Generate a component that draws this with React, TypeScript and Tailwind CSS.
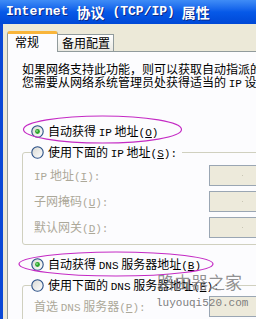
import React from "react";

const L = ({ children }: { children: React.ReactNode }) => (
  <span className="font-['Liberation_Mono',monospace] text-[11px]">{children}</span>
);

const Radio = ({ checked }: { checked?: boolean }) => (
  <svg width="13" height="13" viewBox="0 0 13 13" className="shrink-0">
    <defs>
      <linearGradient id="rfill" x1="0" y1="0" x2="1" y2="1">
        <stop offset="0" stopColor="#D8D8D2" />
        <stop offset="1" stopColor="#FFFFFF" />
      </linearGradient>
    </defs>
    <circle cx="6.5" cy="6.5" r="5.7" fill="url(#rfill)" stroke="#2A4F86" strokeWidth="1.1" />
    {checked && <circle cx="6.5" cy="6.5" r="2.4" fill="#2BA42B" />}
    {checked && <circle cx="6" cy="6" r="0.9" fill="#8EE08E" />}
  </svg>
);

const RadioRow = ({ checked, children }: { checked?: boolean; children: React.ReactNode }) => (
  <div className="flex items-center h-[21px] gap-[4px] whitespace-nowrap">
    <Radio checked={checked} />
    <span>{children}</span>
  </div>
);

const Field = ({ label, dot }: { label: React.ReactNode; dot?: boolean }) => (
  <div className="flex items-center h-[21px]">
    <span className="w-[175px] shrink-0 text-[#ACA899] whitespace-nowrap">{label}</span>
    <div className="w-[80px] h-[21px] shrink-0 border border-[#9AA6B3] bg-[#EDEADB] relative">
      {dot && <span className="absolute left-[32px] top-[9px] w-[1px] h-[1px] bg-[#C9C6B4]" />}
    </div>
  </div>
);

export default function App() {
  return (
    <div className="w-[256px] h-[319px] overflow-hidden relative bg-[#ECE9D8] font-['Noto_Sans_CJK_SC',sans-serif] text-[12px] text-black flex flex-col">
      {/* title bar */}
      <div className="h-[24px] shrink-0 bg-gradient-to-b from-[#3F8CF6] via-[#0659E8] to-[#0048D6] flex items-center pl-[6px] text-white font-bold whitespace-nowrap [text-shadow:1px_1px_#0A2A8A]">
        <span className="font-['Liberation_Mono',monospace] text-[13px]">Internet</span>
        <span className="text-[14px] ml-[8px]">协议</span>
        <span className="font-['Liberation_Mono',monospace] text-[13px] ml-[8px]">(TCP/IP)</span>
        <span className="text-[14px] ml-[7px]">属性</span>
      </div>

      <div className="flex-1 flex flex-col border-l-[3px] border-[#0A48D6] pl-[4px] pt-[7px]">
        {/* tabs */}
        <div className="flex items-end h-[20px] shrink-0">
          <div className="w-[51px] h-[21px] -mb-px relative z-10 bg-[#FCFCFE] border-x border-[#919B9C] border-t-[3px] border-t-[#F9B53A] rounded-t-[3px] pl-[7px] leading-[16px]">
            常规
          </div>
          <div className="w-[56px] h-[17px] border-t border-r border-[#919B9C] bg-gradient-to-b from-white to-[#E9E8E1] pl-[4px] leading-[16px]">
            备用配置
          </div>
        </div>

        {/* panel */}
        <div className="flex-1 bg-[#FCFCFE] border-l border-t border-[#919B9C] pl-[14px] pt-[10px]">
          <div className="leading-[13px] whitespace-nowrap">
            <div>如果网络支持此功能，则可以获取自动指派的</div>
            <div>您需要从网络系统管理员处获得适当的 <L>IP</L> 设置。</div>
          </div>

          <div className="mt-[30px] pl-[9px]">
            <RadioRow checked>
              自动获得 <L>IP</L> 地址<L>(<u>O</u>)</L>
            </RadioRow>
          </div>

          <fieldset className="border border-[#D0D0BF] rounded-[3px] w-[260px] pb-[6px]">
            <legend className="ml-[8px] pr-[5px]">
              <RadioRow>
                使用下面的 <L>IP</L> 地址<L>(<u>S</u>):</L>
              </RadioRow>
            </legend>
            <div className="flex flex-col gap-[5px] pl-[11px] pt-[2px]">
              <Field dot label={<><L>IP</L> 地址<L>(<u>I</u>):</L></>} />
              <Field dot label={<>子网掩码<L>(<u>U</u>):</L></>} />
              <Field dot label={<>默认网关<L>(<u>D</u>):</L></>} />
            </div>
          </fieldset>

          <div className="mt-[9px] pl-[9px]">
            <RadioRow checked>
              自动获得 <L>DNS</L> 服务器地址<L>(<u>B</u>)</L>
            </RadioRow>
          </div>

          <fieldset className="border border-[#D0D0BF] rounded-[3px] w-[260px] pb-[6px]">
            <legend className="ml-[8px] pr-[5px]">
              <RadioRow>
                使用下面的 <L>DNS</L> 服务器地址<L>(<u>E</u>):</L>
              </RadioRow>
            </legend>
            <div className="flex flex-col gap-[5px] pl-[11px]">
              <Field dot label={<>首选 <L>DNS</L> 服务器<L>(<u>P</u>):</L></>} />
            </div>
          </fieldset>
        </div>
      </div>

      {/* annotation ellipses */}
      <svg className="absolute left-0 top-0 pointer-events-none" width="256" height="319">
        <ellipse cx="102.5" cy="129.5" rx="79" ry="13.5" fill="none" stroke="#C42AC4" strokeWidth="1.2" />
        <ellipse cx="116" cy="264" rx="97" ry="12" fill="none" stroke="#C42AC4" strokeWidth="1.2" />
      </svg>

      {/* watermark */}
      <div className="absolute left-[157px] top-[271px] text-[17px] leading-[22px] text-[#7E7E7E]/85 whitespace-nowrap pointer-events-none">
        路由器之家
      </div>
      <div className="absolute left-[156px] top-[296px] font-['Liberation_Mono',monospace] text-[11px] leading-[14px] text-[#7E7E7E] whitespace-nowrap pointer-events-none">
        luyouqi520.com
      </div>
    </div>
  );
}
